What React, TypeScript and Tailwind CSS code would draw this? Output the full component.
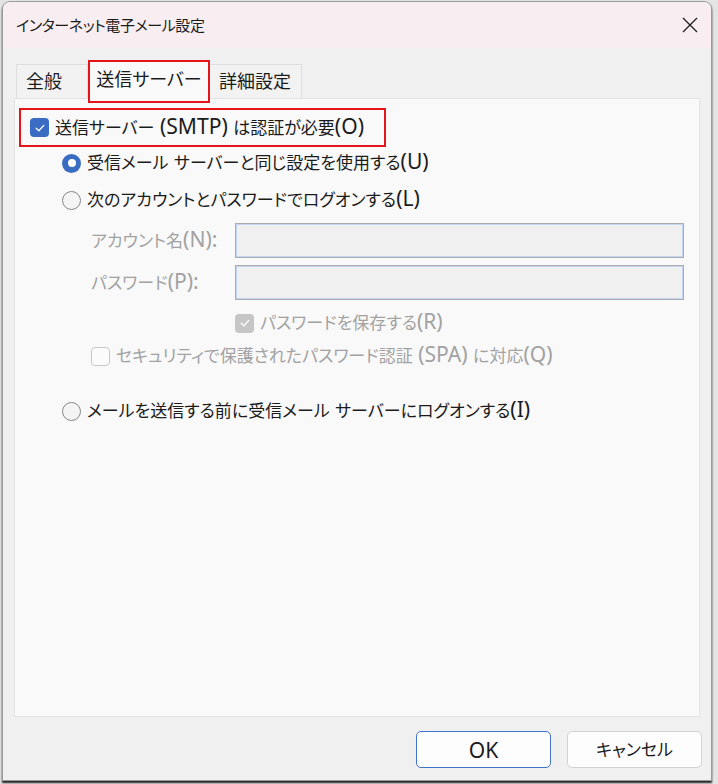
import React from "react";

// latin runs render larger, like Yu Gothic UI does
function T({ s }: { s: string }) {
  const parts = s.split(/([\x20-\x7e]+)/);
  return (
    <>
      {parts.map((p, i) =>
        /[\x20-\x7e]/.test(p) ? (
          <span key={i} className="text-[1.24em] leading-none">
            {p}
          </span>
        ) : (
          p
        )
      )}
    </>
  );
}

function Check({ on, disabled }: { on: boolean; disabled?: boolean }) {
  if (!on) {
    return (
      <span className="w-[19px] h-[19px] rounded-[4px] border border-[#c9c9c9] bg-[#fbfbfb] shrink-0" />
    );
  }
  return (
    <span
      className={
        disabled
          ? "w-[19px] h-[19px] rounded-[4px] bg-[#c6c6c6] flex items-center justify-center shrink-0"
          : "w-[19px] h-[19px] rounded-[4px] bg-[#3a6cc4] flex items-center justify-center shrink-0"
      }
    >
      <svg width="12" height="12" viewBox="0 0 12 12" fill="none">
        <path d="M2.2 6.3 L4.8 8.8 L9.8 3.4" stroke="#ffffff" strokeWidth="1.3" strokeLinecap="round" strokeLinejoin="round" />
      </svg>
    </span>
  );
}

function Radio({ on }: { on: boolean }) {
  if (on) {
    return (
      <span className="w-[19px] h-[19px] rounded-full bg-[#3a6cc4] flex items-center justify-center shrink-0">
        <span className="w-[8px] h-[8px] rounded-full bg-white" />
      </span>
    );
  }
  return <span className="w-[19px] h-[19px] rounded-full border border-[#878787] bg-[#f4f4f4] shrink-0" />;
}

function Field({ label }: { label: string }) {
  return (
    <div className="flex items-center h-[35px] pl-[76px]">
      <span className="w-[144px] text-[#a2a2a2]">
        <T s={label} />
      </span>
      <div className="w-[449px] h-full border border-[#acacac] bg-[#f0f0f0] shadow-[inset_0_0_0_1px_#c2d5f2]" />
    </div>
  );
}

export default function App() {
  return (
    <div className="w-[718px] h-[784px] bg-[#e4e4e4] overflow-hidden font-['Noto_Sans','Noto_Sans_CJK_JP',sans-serif] [font-feature-settings:'palt'] text-[17px] text-[#1b1b1b]">
      <div className="ml-[2px] mt-[1px] w-[710px] h-[780px] rounded-t-[8px] border border-[#9a9a9a] bg-[#f0f0f0] flex flex-col overflow-hidden shadow-[0_2px_2px_rgba(0,0,0,0.85)]">
        {/* title bar */}
        <div className="h-[46px] bg-[#f8eef2] flex items-center justify-between pl-[13px] pr-[13px] shrink-0">
          <span className="text-[15px] tracking-[-0.4px]">インターネット電子メール設定</span>
          <svg width="16" height="16" viewBox="0 0 16 16" className="mt-[-1px]">
            <path d="M1 1 L15 15 M15 1 L1 15" stroke="#1f1f1f" strokeWidth="1.3" />
          </svg>
        </div>

        <div className="flex-1 flex flex-col px-[11px]">
          {/* tabs */}
          <div className="mt-[12px] flex items-end h-[38px] pl-[2px]">
            <div className="w-[72px] h-[34px] border border-b-0 border-[#dedede] bg-[#f2f2f2] flex items-center pl-[9px] text-[18px]">
              全般
            </div>
            <div className="relative z-10 w-[122px] h-[43px] -mb-[5px] border-2 border-[#e4141b] bg-[#f9f9f9] flex items-center justify-center pb-[4px] text-[18px]">
              送信サーバー
            </div>
            <div className="w-[92px] h-[34px] border border-b-0 border-l-0 border-[#dedede] bg-[#f2f2f2] flex items-center pl-[9px] text-[18px]">
              詳細設定
            </div>
          </div>

          {/* panel */}
          <div className="h-[619px] border border-[#e3e3e3] bg-[#f9f9f9] flex flex-col">
            <div className="mt-[9px] ml-[4px] w-[367px] h-[39px] border-2 border-[#e4141b] flex items-center pl-[9px] gap-[6px]">
              <Check on />
              <span>
                <T s="送信サーバー (SMTP) は認証が必要(O)" />
              </span>
            </div>

            <div className="mt-[1px] h-[30px] flex items-center pl-[47px] gap-[6px]">
              <Radio on />
              <span>
                <T s="受信メール サーバーと同じ設定を使用する(U)" />
              </span>
            </div>
            <div className="mt-[7px] h-[30px] flex items-center pl-[47px] gap-[6px]">
              <Radio on={false} />
              <span>
                <T s="次のアカウントとパスワードでログオンする(L)" />
              </span>
            </div>

            <div className="mt-[8px]">
              <Field label="アカウント名(N):" />
            </div>
            <div className="mt-[7px]">
              <Field label="パスワード(P):" />
            </div>

            <div className="mt-[10px] h-[26px] flex items-center pl-[220px] gap-[6px] text-[#a2a2a2]">
              <Check on disabled />
              <span>
                <T s="パスワードを保存する(R)" />
              </span>
            </div>
            <div className="mt-[7px] h-[26px] flex items-center pl-[76px] gap-[6px] text-[#a2a2a2]">
              <Check on={false} disabled />
              <span>
                <T s="セキュリティで保護されたパスワード認証 (SPA) に対応(Q)" />
              </span>
            </div>

            <div className="mt-[27px] h-[30px] flex items-center pl-[47px] gap-[6px]">
              <Radio on={false} />
              <span>
                <T s="メールを送信する前に受信メール サーバーにログオンする(I)" />
              </span>
            </div>
          </div>

          {/* buttons */}
          <div className="mt-[14px] flex justify-end gap-[16px] -mr-[2px]">
            <button className="w-[135px] h-[37px] rounded-[5px] border-[1.5px] border-[#3f73cc] bg-[#fdfdfd] flex items-center justify-center">
              <T s="OK" />
            </button>
            <button className="w-[135px] h-[37px] rounded-[5px] border border-[#d2d2d2] bg-[#fdfdfd] flex items-center justify-center">
              キャンセル
            </button>
          </div>
        </div>
      </div>
    </div>
  );
}
